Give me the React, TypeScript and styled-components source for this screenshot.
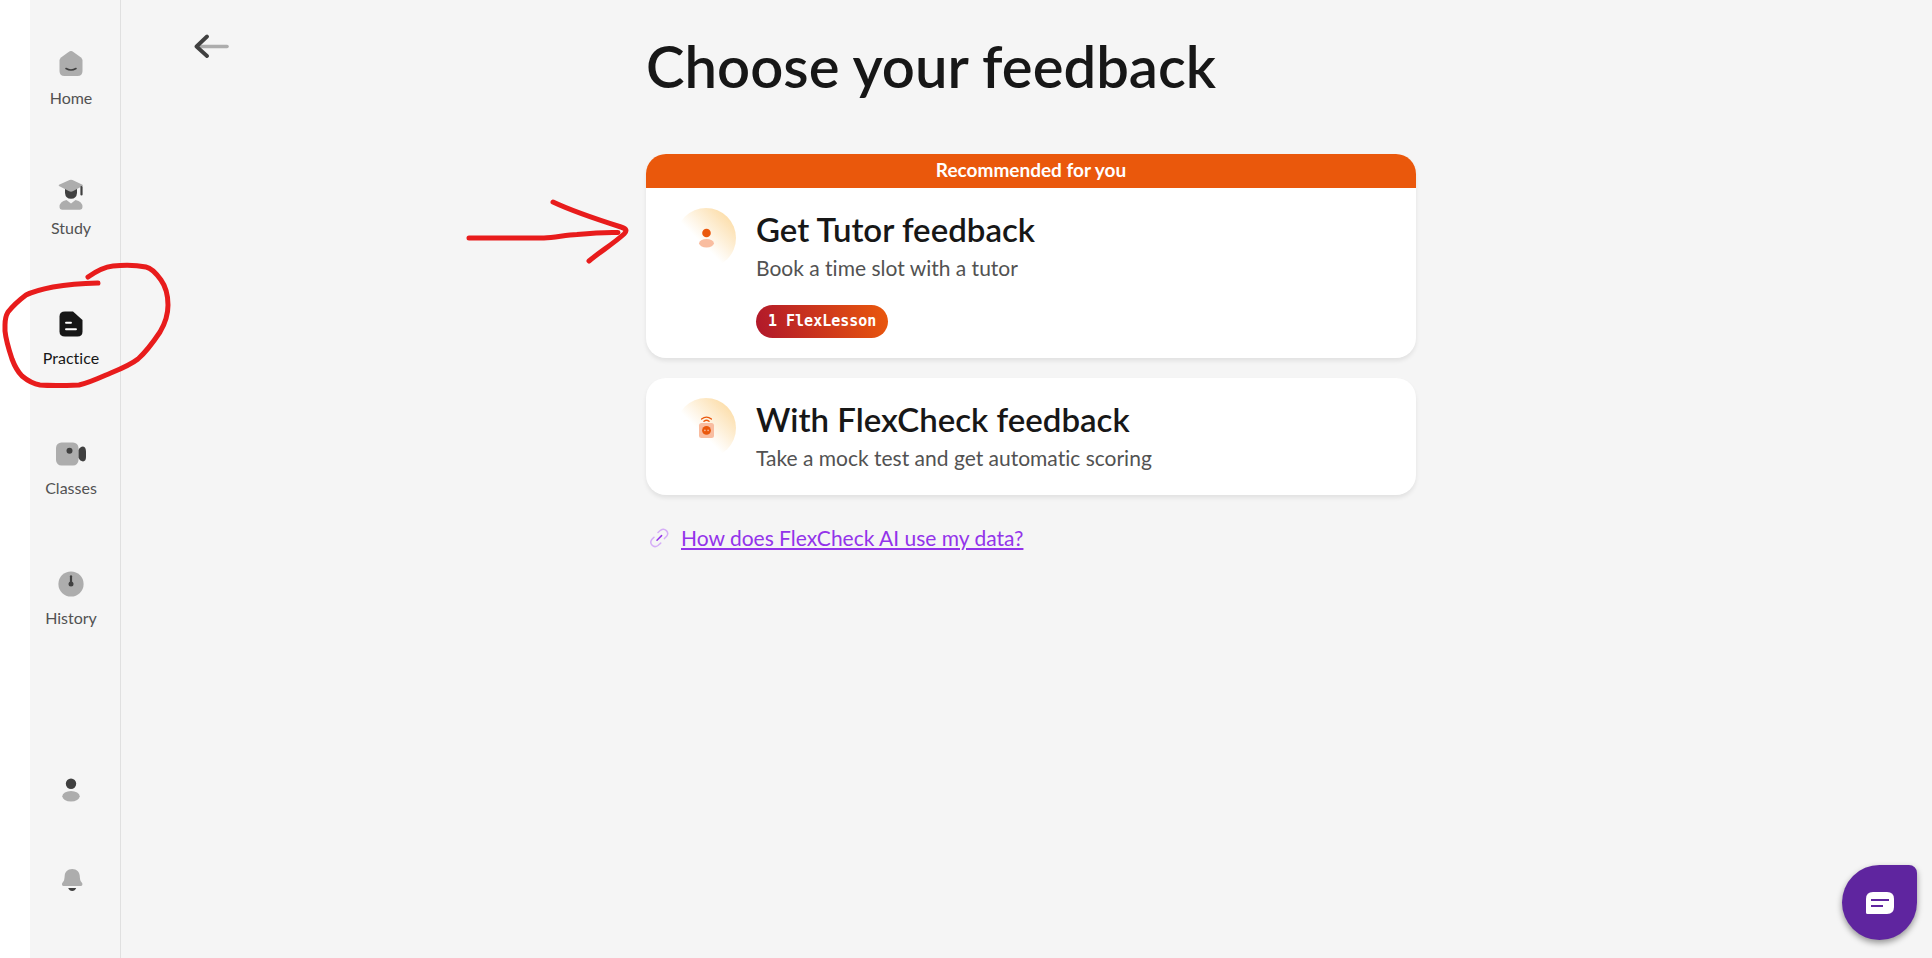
import React from "react";
import styled, { createGlobalStyle } from "styled-components";

const color = {
  page: "#f5f5f5",
  line: "#e0e0e0",
  ink: "#171717",
  muted: "#525252",
  gray: "#adadad",
  dark: "#404040",
  orange: "#ea580c",
  peach: "#f9bda0",
  purple: "#9333ea",
  fab: "#5f259f",
  marker: "#e81c1c",
};

const GlobalStyle = createGlobalStyle`
  *, *::before, *::after { box-sizing: border-box; }
  body {
    margin: 0;
    background: #ffffff;
    color: ${color.ink};
    font-family: Lato, "Liberation Sans", sans-serif;
    font-variant-ligatures: none;
  }
  h1, h2, p { margin: 0; }
  svg { display: block; }
`;

const Shell = styled.div`
  position: relative;
  display: flex;
  min-height: 100vh;
  padding-left: 30px;
`;

const Sidebar = styled.nav`
  flex: none;
  display: flex;
  flex-direction: column;
  justify-content: space-between;
  width: 91px;
  padding: 48px 8px 58px 0;
  background: ${color.page};
  border-right: 1px solid ${color.line};
`;

const NavList = styled.ul<{ $gap: number }>`
  display: flex;
  flex-direction: column;
  gap: ${(p) => p.$gap}px;
  margin: 0;
  padding: 0;
  list-style: none;
`;

const NavLink = styled.a<{ $active?: boolean }>`
  display: flex;
  flex-direction: column;
  align-items: center;
  gap: 8px;
  color: ${(p) => (p.$active ? color.ink : color.muted)};
  font-size: 16px;
  line-height: 20px;
  text-decoration: none;
`;

const RoundButton = styled.button`
  display: grid;
  place-items: center;
  width: 40px;
  height: 40px;
  margin: 0 auto;
  padding: 0;
  border: 0;
  background: none;
  cursor: pointer;
`;

const Main = styled.main`
  flex: 1;
  display: grid;
  grid-template-columns: minmax(110px, 1fr) minmax(0, 770px) minmax(0, 1fr);
  align-content: start;
  padding: 30px 0 0 9px;
  background: ${color.page};
`;

const BackButton = styled.button`
  justify-self: start;
  align-self: start;
  margin-left: 64px;
  padding: 4px 0;
  border: 0;
  background: none;
  cursor: pointer;
`;

const Content = styled.div`
  display: flex;
  flex-direction: column;
`;

const Title = styled.h1`
  margin-bottom: 52px;
  font-size: 58px;
  font-weight: 600;
  line-height: 72px;
`;

const Options = styled.div`
  display: flex;
  flex-direction: column;
  gap: 20px;
`;

const Card = styled.article`
  overflow: hidden;
  border-radius: 20px;
  background: #ffffff;
  box-shadow: 0 3px 4px rgba(0, 0, 0, 0.08);
`;

const Banner = styled.p`
  padding-bottom: 2px;
  background: ${color.orange};
  color: #ffffff;
  font-size: 19px;
  font-weight: 700;
  line-height: 32px;
  text-align: center;
`;

const CardBody = styled.div`
  display: flex;
  gap: 20px;
  padding: 20px 30px;
`;

const Halo = styled.div`
  flex: none;
  display: grid;
  place-items: center;
  width: 60px;
  height: 60px;
  border-radius: 50%;
  background: linear-gradient(225deg, #fcdca6 10%, #ffffff 58%);
`;

const CardTitle = styled.h2`
  font-size: 33px;
  font-weight: 600;
  line-height: 43px;
`;

const CardText = styled.p`
  color: ${color.muted};
  font-size: 21px;
  line-height: 34px;
`;

const Pill = styled.span`
  display: inline-block;
  margin-top: 20px;
  padding: 0 12px;
  border-radius: 17px;
  background: linear-gradient(75deg, #b0172b, ${color.orange});
  color: #ffffff;
  font-family: "DejaVu Sans Mono", monospace;
  font-size: 15px;
  font-weight: 700;
  line-height: 33px;
  vertical-align: top;
`;

const HelpRow = styled.div`
  display: flex;
  align-items: center;
  gap: 11px;
  margin-top: 27px;
  padding-left: 3px;
`;

const HelpLink = styled.a`
  color: ${color.purple};
  font-size: 21px;
  line-height: 32px;
  text-decoration: underline;
  text-decoration-thickness: 2px;
  text-underline-offset: 2px;
`;

const ChatButton = styled.button`
  position: fixed;
  right: 15px;
  bottom: 18px;
  display: grid;
  place-items: center;
  width: 75px;
  height: 75px;
  padding: 0;
  border: 0;
  border-radius: 50% 8px 50% 50%;
  background: ${color.fab};
  box-shadow: 0 3px 6px rgba(0, 0, 0, 0.4);
  cursor: pointer;
`;

const Markup = styled.svg`
  position: absolute;
  top: 0;
  left: 0;
  pointer-events: none;
`;

const HomeIcon = () => (
  <svg width="32" height="32" viewBox="0 0 32 32" aria-hidden="true">
    <path d="M13.600 3.900Q16 2.300 18.400 3.900L26 9.400Q27.500 10.600 27.500 12.500V23Q27.500 28 22.500 28H9.500Q4.500 28 4.500 23V12.500Q4.500 10.600 6 9.400Z" fill={color.gray} />
    <path d="M11 20.500Q16 23.500 21 20.500" fill="none" stroke={color.dark} strokeWidth="1.600" strokeLinecap="round" />
  </svg>
);

const StudyIcon = () => (
  <svg width="32" height="32" viewBox="0 0 32 32" aria-hidden="true">
    <path d="M10 10.500H22V15Q21.500 20.800 16 20.800Q10.500 20.800 10 15Z" fill={color.dark} />
    <path d="M14.500 2.100Q16 1.400 17.500 2.100L27.500 6.700Q28.300 7.300 27.500 7.900L17.800 13.300Q16 14.200 14.200 13.300L4 7.900Q3.300 7.300 4 6.700Z" fill={color.gray} />
    <path d="M26.500 9V16.500" stroke={color.dark} strokeWidth="2.200" strokeLinecap="round" />
    <path d="M11.500 22.100L16 25.600L20.500 22.100Q27.500 23.400 27.500 29.300Q27.500 31.700 25 31.700H7Q4.500 31.700 4.500 29.300Q4.500 23.400 11.500 22.100Z" fill={color.gray} />
  </svg>
);

const PracticeIcon = () => (
  <svg width="32" height="32" viewBox="0 0 32 32" aria-hidden="true">
    <path d="M10 3.500H18L27.500 12V23.500Q27.500 28.500 22.500 28.500H10Q4.500 28.500 4.500 23.500V8.500Q4.500 3.500 10 3.500Z" fill={color.ink} />
    <path d="M11 14.800H16M11 21.200H21" stroke="#ffffff" strokeWidth="1.900" strokeLinecap="round" />
  </svg>
);

const ClassesIcon = () => (
  <svg width="32" height="32" viewBox="0 0 32 32" aria-hidden="true">
    <rect x="1" y="4.500" width="22.500" height="23" rx="5.500" fill={color.gray} />
    <circle cx="14.500" cy="12.700" r="3" fill={color.dark} />
    <path d="M23.500 12Q25 8.500 28 8.500Q31 8.700 31 14V19Q31 23.200 28 23.400Q25 23.300 23.500 19.800Z" fill={color.dark} />
  </svg>
);

const HistoryIcon = () => (
  <svg width="32" height="32" viewBox="0 0 32 32" aria-hidden="true">
    <circle cx="16" cy="16" r="12.600" fill={color.gray} />
    <path d="M16 8.300V16" stroke={color.dark} strokeWidth="2.200" strokeLinecap="round" />
    <circle cx="16" cy="16" r="2.500" fill={color.dark} />
  </svg>
);

const ProfileIcon = () => (
  <svg width="32" height="32" viewBox="0 0 32 32" aria-hidden="true">
    <circle cx="16" cy="9.800" r="5.200" fill={color.dark} />
    <ellipse cx="16" cy="22.300" rx="8.700" ry="5.200" fill={color.gray} />
  </svg>
);

const BellIcon = () => (
  <svg width="32" height="32" viewBox="0 0 32 32" aria-hidden="true">
    <path d="M17.200 4.900C22 4.900 24.300 8 24.700 11.500C25 15.500 25.200 17 26.700 18.400C28.200 20 27.200 22 25.500 22H9C7.200 22 6.200 20 7.700 18.400C9.200 17 9.400 15.500 9.700 11.500C10.100 8 12.400 4.900 17.200 4.900Z" fill={color.gray} />
    <path d="M13.200 24H21.200Q20 27 17.200 27Q14.400 27 13.200 24Z" fill={color.dark} />
  </svg>
);

const ArrowIcon = () => (
  <svg width="36" height="24" viewBox="0 0 36 24" aria-hidden="true">
    <path d="M6 12.500H33" stroke={color.gray} strokeWidth="3.600" strokeLinecap="round" />
    <path d="M13 2.500L2.500 12.500L13 22" fill="none" stroke={color.dark} strokeWidth="3.800" strokeLinecap="round" strokeLinejoin="round" />
  </svg>
);

const TutorIcon = () => (
  <svg width="24" height="24" viewBox="0 0 24 24" aria-hidden="true">
    <circle cx="12.500" cy="7" r="4.300" fill={color.orange} />
    <ellipse cx="12.500" cy="17.300" rx="7.400" ry="4.200" fill={color.peach} />
  </svg>
);

const RobotIcon = () => (
  <svg width="24" height="24" viewBox="0 0 24 24" aria-hidden="true">
    <path d="M7.600 3Q12.500-.8 17.400 3M10 5.200Q12.500 3.200 15 5.200" fill="none" stroke={color.orange} strokeWidth="1.400" strokeLinecap="round" />
    <rect x="5" y="7" width="15" height="15" rx="2.500" fill={color.peach} />
    <circle cx="12.500" cy="14.400" r="4.400" fill={color.orange} />
    <circle cx="10.900" cy="14.400" r=".8" fill={color.peach} />
    <circle cx="14.100" cy="14.400" r=".8" fill={color.peach} />
  </svg>
);

const LinkIcon = () => (
  <svg width="21" height="20" viewBox="0 0 21 20" fill="none" strokeLinecap="round" aria-hidden="true">
    <path d="M9 4.500L11.500 2.300C15.800-.8 20.800 4.200 17.600 8.300L15.400 10.600M5 9.200L2.800 11.500C-.2 15.600 4.600 20.700 9 17.500L11.700 15.100" stroke="#d5aef7" strokeWidth="1.500" />
    <path d="M8 12.200L12.600 7.600" stroke={color.purple} strokeWidth="1.500" />
  </svg>
);

const ChatIcon = () => (
  <svg width="28" height="22" viewBox="0 0 28 22" aria-hidden="true">
    <path d="M7 0H21Q28 0 28 7V15Q28 22 21 22H1.500Q0 22 0 20.500V7Q0 0 7 0Z" fill="#ffffff" />
    <path d="M5 8H23M5 14H17" stroke={color.fab} strokeWidth="2" />
  </svg>
);

const navItems = [
  { label: "Home", Icon: HomeIcon },
  { label: "Study", Icon: StudyIcon },
  { label: "Practice", Icon: PracticeIcon, active: true },
  { label: "Classes", Icon: ClassesIcon },
  { label: "History", Icon: HistoryIcon },
];

export default function App() {
  return (
    <>
      <GlobalStyle />
      <Shell>
        <Sidebar aria-label="Main">
          <NavList $gap={70}>
            {navItems.map(({ label, Icon, active }) => (
              <li key={label}>
                <NavLink href="#" $active={active} aria-current={active ? "page" : undefined}>
                  <Icon />
                  {label}
                </NavLink>
              </li>
            ))}
          </NavList>
          <NavList $gap={50}>
            <li>
              <RoundButton type="button" aria-label="Profile">
                <ProfileIcon />
              </RoundButton>
            </li>
            <li>
              <RoundButton type="button" aria-label="Notifications">
                <BellIcon />
              </RoundButton>
            </li>
          </NavList>
        </Sidebar>

        <Main>
          <BackButton type="button" aria-label="Back">
            <ArrowIcon />
          </BackButton>
          <Content>
            <Title>Choose your feedback</Title>
            <Options>
              <Card>
                <Banner>Recommended for you</Banner>
                <CardBody>
                  <Halo>
                    <TutorIcon />
                  </Halo>
                  <div>
                    <CardTitle>Get Tutor feedback</CardTitle>
                    <CardText>Book a time slot with a tutor</CardText>
                    <Pill>1 FlexLesson</Pill>
                  </div>
                </CardBody>
              </Card>
              <Card>
                <CardBody>
                  <Halo>
                    <RobotIcon />
                  </Halo>
                  <div>
                    <CardTitle>With FlexCheck feedback</CardTitle>
                    <CardText>Take a mock test and get automatic scoring</CardText>
                  </div>
                </CardBody>
              </Card>
            </Options>
            <HelpRow>
              <LinkIcon />
              <HelpLink href="#">How does FlexCheck AI use my data?</HelpLink>
            </HelpRow>
          </Content>
        </Main>

        <ChatButton type="button" aria-label="Open chat">
          <ChatIcon />
        </ChatButton>

        <Markup width="660" height="400" viewBox="0 0 660 400" fill="none" stroke={color.marker} strokeWidth="5" strokeLinecap="round" strokeLinejoin="round" aria-hidden="true">
          <path d="M98 283C80 283.500 65 285 53 287C43 289 34 291 26 295C18 301 12 307 8 312C5 317 5 321 5 325V331C6 341 9 350 12 359C15 367 18 372 22 376C28 381 34 384 40 385C53 386 66 385.500 79 385C88 383 97 379 106 375C118 370 129 366 138 359C147 351 154 341 160 332C166 322 168 314 168 305C168 296 166 287 161 280C156 273 151 268 146 267C136 265 123 265 113 266C104 267 95 272 88 277" />
          <path d="M469 238H544C555 237.500 566 235 577 234.500C592 233 604 232 618 232.500" />
          <path d="M553 202C572 211 599 220 621 227C627 229 627 231 624 234C613 244 601 251 589 261" />
        </Markup>
      </Shell>
    </>
  );
}
